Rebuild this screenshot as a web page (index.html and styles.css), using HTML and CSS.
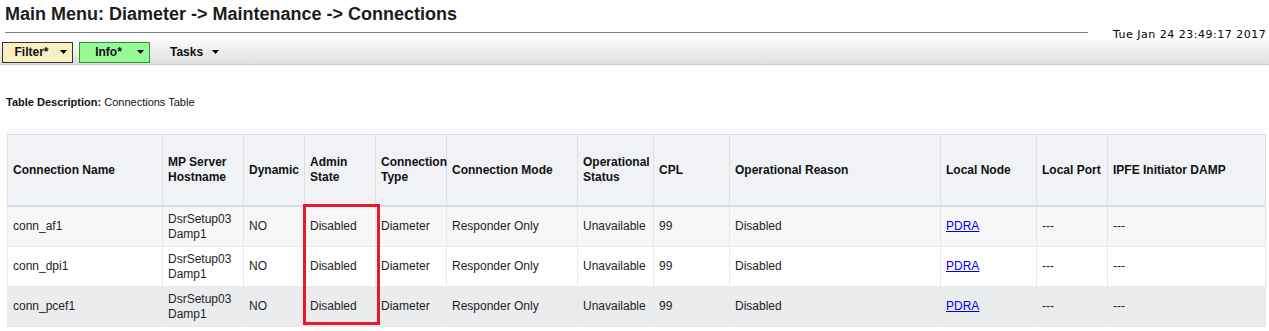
FILE: index.html
```html
<!DOCTYPE html>
<html>
<head>
    <link rel="stylesheet" href="styles.css">
    <title>Connections</title>
</head>
<body>
    <h1 class="page-title">Main Menu: Diameter -&gt; Maintenance -&gt; Connections</h1>

    <div class="topbar">
        <div class="rule"></div>
        <div class="date">Tue Jan 24 23:49:17 2017 IST</div>
    </div>

    <div class="toolbar">
        <div class="btn btn-filter"><span class="label">Filter*</span><svg class="arrow" width="7" height="4" viewBox="0 0 7 4"><polygon points="0,0 7,0 3.5,4" fill="#000"/></svg></div>
        <div class="btn btn-info"><span class="label">Info*</span><svg class="arrow" width="7" height="4" viewBox="0 0 7 4"><polygon points="0,0 7,0 3.5,4" fill="#000"/></svg></div>
        <div class="tasks">Tasks <svg class="arrow" width="7" height="4" viewBox="0 0 7 4"><polygon points="0,0 7,0 3.5,4" fill="#000"/></svg></div>
    </div>

    <div class="description"><b>Table Description:</b> Connections Table</div>

    <div class="table-wrap">
        <table class="grid">
            <colgroup>
                <col style="width:155px">
                <col style="width:81px">
                <col style="width:61px">
                <col style="width:71px">
                <col style="width:71px">
                <col style="width:131px">
                <col style="width:76px">
                <col style="width:76px">
                <col style="width:211px">
                <col style="width:96px">
                <col style="width:71px">
                <col style="width:158px">
            </colgroup>
            <thead>
                <tr>
                    <th>Connection Name</th>
                    <th>MP Server Hostname</th>
                    <th>Dynamic</th>
                    <th>Admin State</th>
                    <th>Connection Type</th>
                    <th>Connection Mode</th>
                    <th>Operational Status</th>
                    <th>CPL</th>
                    <th>Operational Reason</th>
                    <th>Local Node</th>
                    <th>Local Port</th>
                    <th>IPFE Initiator DAMP</th>
                </tr>
            </thead>
            <tbody>
                <tr class="odd">
                    <td>conn_af1</td><td>DsrSetup03 Damp1</td><td>NO</td><td>Disabled</td><td>Diameter</td>
                    <td>Responder Only</td><td>Unavailable</td><td>99</td><td>Disabled</td>
                    <td><a href="#">PDRA</a></td><td>---</td><td>---</td>
                </tr>
                <tr class="even">
                    <td>conn_dpi1</td><td>DsrSetup03 Damp1</td><td>NO</td><td>Disabled</td><td>Diameter</td>
                    <td>Responder Only</td><td>Unavailable</td><td>99</td><td>Disabled</td>
                    <td><a href="#">PDRA</a></td><td>---</td><td>---</td>
                </tr>
                <tr class="hover">
                    <td>conn_pcef1</td><td>DsrSetup03 Damp1</td><td>NO</td><td>Disabled</td><td>Diameter</td>
                    <td>Responder Only</td><td>Unavailable</td><td>99</td><td>Disabled</td>
                    <td><a href="#">PDRA</a></td><td>---</td><td>---</td>
                </tr>
            </tbody>
        </table>
        <div class="highlight"></div>
    </div>
</body>
</html>
```

FILE: styles.css
```css
body {
    margin: 0;
    font-family: "Liberation Sans", Arial, sans-serif;
    font-size: 12px;
    color: #222;
    background-color: white;
    overflow: hidden;
}
.page-title {
    margin: 0;
    padding: 3px 5px 0;
    height: 23px;
    font-size: 18px;
    line-height: 22px;
    font-weight: bold;
    color: #1c1c1c;
    white-space: nowrap;
}
.topbar {
    display: flex;
    align-items: center;
    height: 14px;
}
.rule {
    flex: none;
    width: 1083px;
    margin-left: 5px;
    margin-top: -1px;
    border-top: 1px solid #808080;
}
.date {
    flex: none;
    margin-left: 25px;
    padding-top: 3px;
    font-family: "DejaVu Sans", Verdana, sans-serif;
    font-size: 11px;
    line-height: 12px;
    letter-spacing: 0.5px;
    color: #000;
    white-space: nowrap;
}
.toolbar {
    display: flex;
    align-items: center;
    height: 24px;
    border-bottom: 1px solid #cdcdcd;
    background: linear-gradient(#fbfbfb, #dedede);
}
.btn {
    display: flex;
    align-items: center;
    box-sizing: border-box;
    width: 71px;
    height: 21px;
    margin-left: 2px;
    padding-right: 5px;
    font-weight: bold;
    color: #111;
}
.btn .label {
    flex: 1;
    text-align: center;
}
.btn-filter {
    background-color: #f8f0c0;
    border: 1px solid #333;
}
.btn-info {
    margin-left: 6px;
    background-color: #98f898;
    border: 1px solid #2a962a;
}
.tasks {
    display: flex;
    align-items: center;
    gap: 9px;
    margin-left: 20px;
    font-weight: bold;
    color: #111;
}
.description {
    margin-top: 30px;
    padding-left: 6px;
    font-size: 11px;
    line-height: 14px;
    color: #111;
}
.table-wrap {
    position: relative;
    margin: 20px 0 0 7px;
    padding-top: 5px;
    width: 1258px;
    background-color: #f9f9fb;
}
.grid {
    border-collapse: collapse;
    table-layout: fixed;
    width: 1258px;
}
.grid th, .grid td {
    padding: 0 5px;
    text-align: left;
    vertical-align: middle;
    line-height: 15px;
    overflow: visible;
}
.grid th {
    height: 70px;
    font-weight: bold;
    color: #111;
    background-color: #f1f2f6;
    border: 1px solid #dce1e8;
    border-bottom: 2px solid #d6dce4;
}
.grid td {
    height: 39px;
    color: #1e1e1e;
    border: 1px solid #e7e8eb;
}
.grid tr.odd td {
    background-color: #f7f7f8;
}
.grid tr.even td {
    background-color: #ffffff;
}
.grid tr.hover td {
    background-color: #ebecee;
}
.grid a {
    color: #0000ee;
    text-decoration: underline;
}
.highlight {
    position: absolute;
    left: 296px;
    top: 75px;
    width: 71px;
    height: 115px;
    border: 3px solid #e8192b;
}
```
